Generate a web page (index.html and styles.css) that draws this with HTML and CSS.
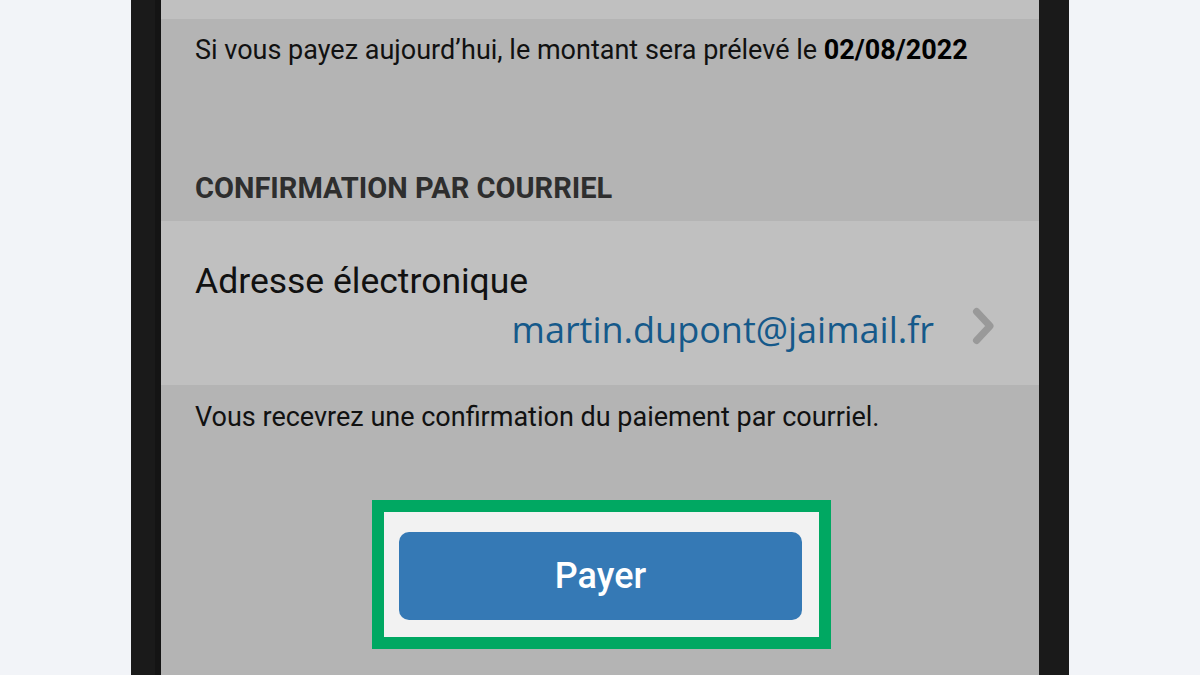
FILE: index.html
```html
<!DOCTYPE html>
<html lang="fr">
<head>
<meta charset="utf-8">
<title>Payer</title>
<link rel="stylesheet" href="styles.css">
</head>
<body>
<div class="stage">
  <div class="phone">
    <div class="screen">
      <div class="top-band"></div>
      <div class="info">
        <p class="due">Si vous payez aujourd’hui, le montant sera prélevé le <strong>02/08/2022</strong></p>
        <h2 class="section-title">CONFIRMATION PAR COURRIEL</h2>
      </div>
      <div class="row">
        <div class="row-label">Adresse électronique</div>
        <div class="row-value">
          <span class="email">martin.dupont@jaimail.fr</span>
          <svg class="chevron" width="28" height="44" viewBox="0 0 28 44"><path d="M8.5 4.5 L22 19 L8.5 33.5" fill="none" stroke="#999" stroke-width="7" stroke-linecap="round" stroke-linejoin="round"/></svg>
        </div>
      </div>
      <p class="note">Vous recevrez une confirmation du paiement par courriel.</p>
      <div class="pay-area">
        <div class="highlight">
          <button class="pay-btn">Payer</button>
        </div>
      </div>
    </div>
  </div>
</div>
</body>
</html>
```

FILE: styles.css
```css
* { box-sizing: border-box; }
html, body { margin: 0; padding: 0; }
body {
  background: #f2f4f8;
  font-family: Roboto, "Liberation Sans", sans-serif;
}
.stage {
  width: 1200px;
  height: 675px;
  overflow: hidden;
  display: flex;
  justify-content: center;
}
.phone {
  width: 938px;
  height: 675px;
  background: #1a1a1a;
  padding: 0 30px 0 24px;
}
.screen {
  height: 100%;
  background: #b4b4b4;
  border-left: 6px solid #141414;
  display: flex;
  flex-direction: column;
}
.top-band {
  height: 19px;
  background: #c0c0c0;
}
.info {
  height: 202px;
  padding: 15px 0 0 34px;
}
.due {
  margin: 0;
  font-size: 27px;
  line-height: 32px;
  color: #111;
}
.due strong { font-weight: 700; color: #000; }
.section-title {
  margin: 105px 0 0;
  font-size: 29px;
  line-height: 34px;
  font-weight: 700;
  color: #2e2e2e;
}
.row {
  height: 164px;
  background: #c0c0c0;
  padding: 39px 43px 0 34px;
}
.row-label {
  font-size: 35.5px;
  line-height: 42px;
  color: #111;
}
.row-value {
  display: flex;
  justify-content: flex-end;
  align-items: flex-start;
  gap: 34px;
  margin-top: 6px;
}
.email {
  font-family: "Open Sans", "Noto Sans", sans-serif;
  font-size: 36px;
  line-height: 44px;
  color: #15598a;
}
.chevron { display: block; margin-top: -1px; }
.note {
  margin: 0;
  padding: 16px 0 0 34px;
  font-size: 27px;
  line-height: 32px;
  color: #111;
}
.pay-area {
  display: flex;
  justify-content: center;
  padding: 67px 0 0 3px;
}
.highlight {
  width: 459px;
  height: 149px;
  border: 12px solid #00a862;
  background: #f2f2f2;
  padding: 20px 17px 0 15px;
}
.pay-btn {
  display: block;
  width: 403px;
  height: 88px;
  border: 0;
  border-radius: 10px;
  background: #3579b5;
  color: #fff;
  font-family: Roboto, "Liberation Sans", sans-serif;
  font-size: 36px;
  font-weight: 500;
}
```
